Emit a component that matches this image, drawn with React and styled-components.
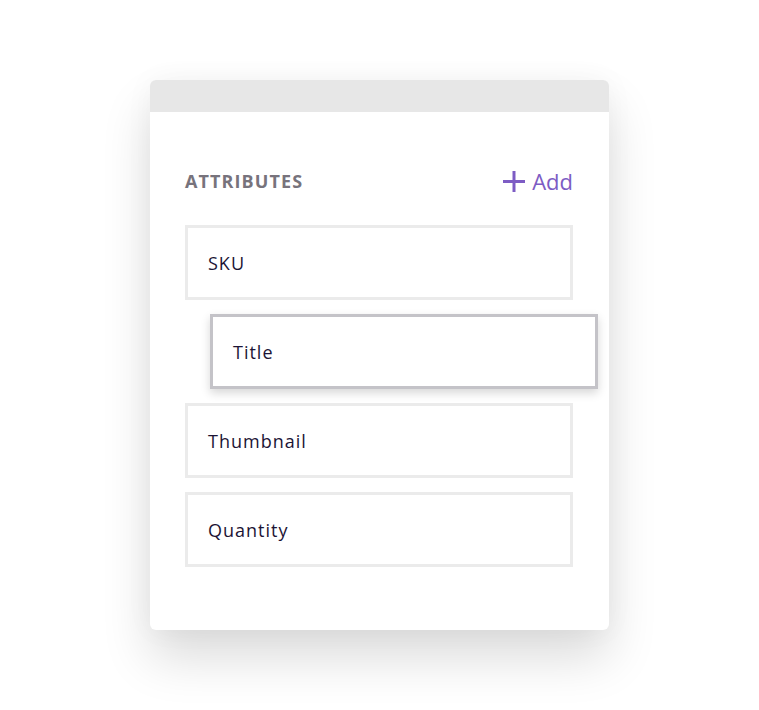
import React from "react";
import styled, { createGlobalStyle } from "styled-components";

const GlobalStyle = createGlobalStyle`
  body {
    margin: 0;
    background: #ffffff;
    font-family: "Open Sans", "Noto Sans", sans-serif;
  }
`;

const Page = styled.div`
  padding: 80px 0 80px 150px;
`;

const Card = styled.div`
  width: 459px;
  background: #ffffff;
  border-radius: 6px;
  overflow: hidden;
  box-shadow: 0 28px 50px rgba(0, 0, 0, 0.14), 0 0 30px rgba(0, 0, 0, 0.04);
`;

const CardTop = styled.div`
  height: 32px;
  background: #e7e7e7;
`;

const CardBody = styled.div`
  padding: 54px 36px 63px 35px;
`;

const HeaderRow = styled.div`
  display: flex;
  align-items: center;
  justify-content: space-between;
  height: 30px;
  margin-bottom: 29px;
`;

const SectionTitle = styled.h3`
  margin: 0;
  font-size: 18px;
  font-weight: 700;
  letter-spacing: 1.1px;
  text-transform: uppercase;
  color: #77737c;
`;

const AddButton = styled.button`
  display: flex;
  align-items: center;
  gap: 7px;
  padding: 0;
  border: none;
  background: transparent;
  font-family: inherit;
  font-size: 22px;
  color: #7d5cc4;
  cursor: pointer;
`;

const List = styled.div`
  display: flex;
  flex-direction: column;
  gap: 14px;
`;

const Item = styled.div`
  box-sizing: border-box;
  height: 75px;
  display: flex;
  align-items: center;
  padding: 0 20px;
  background: #ffffff;
  border: 3px solid ${(p) => (p.$dragging ? "#c4c3c8" : "#ebebeb")};
  font-size: 18px;
  font-weight: 500;
  letter-spacing: 1px;
  color: #1c1435;
  transform: ${(p) => (p.$dragging ? "translateX(25px)" : "none")};
  box-shadow: ${(p) => (p.$dragging ? "0 4px 9px rgba(0, 0, 0, 0.16)" : "none")};
`;

const PlusIcon = () => (
  <svg width="22" height="21" viewBox="0 0 22 21">
    <path d="M11 0v21M0 10.5h22" stroke="currentColor" strokeWidth="3" />
  </svg>
);

const attributes = [
  { name: "SKU" },
  { name: "Title", dragging: true },
  { name: "Thumbnail" },
  { name: "Quantity" },
];

export default function App() {
  return (
    <>
      <GlobalStyle />
      <Page>
        <Card>
          <CardTop />
          <CardBody>
            <HeaderRow>
              <SectionTitle>Attributes</SectionTitle>
              <AddButton>
                <PlusIcon />
                Add
              </AddButton>
            </HeaderRow>
            <List>
              {attributes.map((a) => (
                <Item key={a.name} $dragging={a.dragging}>
                  {a.name}
                </Item>
              ))}
            </List>
          </CardBody>
        </Card>
      </Page>
    </>
  );
}
